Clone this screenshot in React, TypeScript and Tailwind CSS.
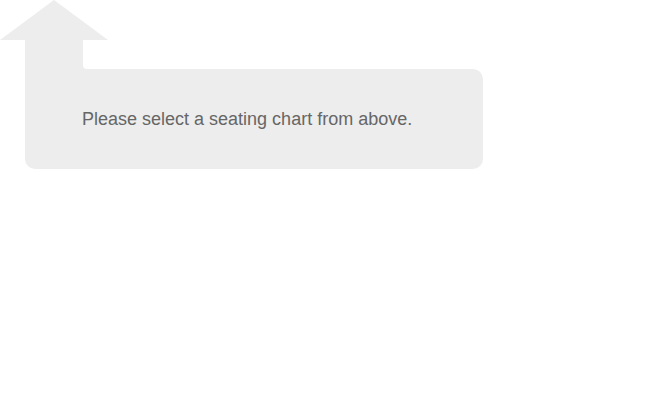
import React from "react";

export default function App() {
  return (
    <div className="w-[670px] h-[410px] bg-white flex flex-col items-start font-['Liberation_Sans',Arial,sans-serif]">
      {/* Arrow head */}
      <svg width="108" height="40" viewBox="0 0 108 40" className="block">
        <polygon points="54,0 108,40 0,40" fill="#ededed" />
      </svg>

      {/* Arrow shaft with a small fillet where it meets the box */}
      <div className="flex items-end ml-[25px]">
        <div className="w-[58px] h-[29px] bg-[#ededed]" />
        <div className="w-[4px] h-[4px] bg-[#ededed]">
          <div className="w-full h-full bg-white rounded-bl-[4px]" />
        </div>
      </div>

      {/* Message box */}
      <div className="ml-[25px] w-[458px] h-[100px] bg-[#ededed] rounded-[10px] rounded-tl-none flex items-center pl-[57px]">
        <p className="text-[18px] text-[#666666]">Please select a seating chart from above.</p>
      </div>
    </div>
  );
}
